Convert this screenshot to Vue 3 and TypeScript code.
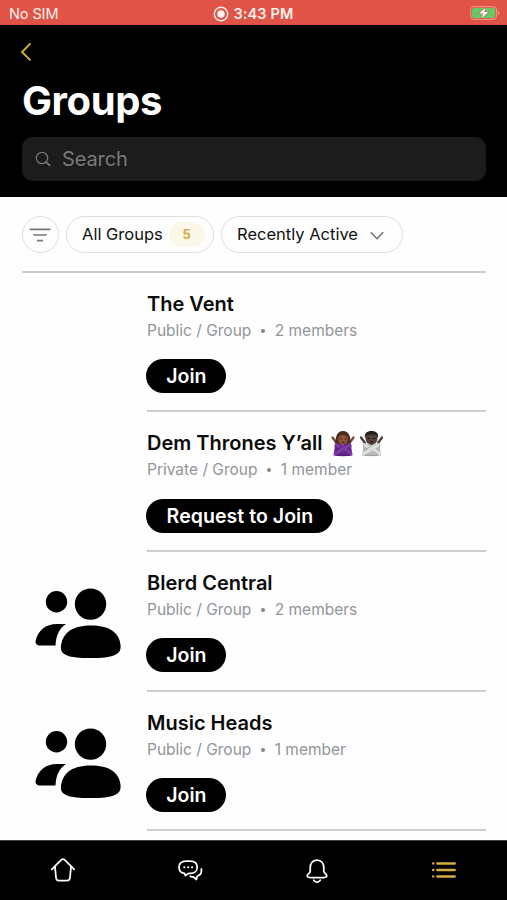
<script setup lang="ts">
interface Group {
  name: string
  privacy: string
  members: string
  action: string
  avatar: boolean
  emoji: boolean
}

const groups: Group[] = [
  { name: 'The Vent', privacy: 'Public', members: '2 members', action: 'Join', avatar: false, emoji: false },
  { name: 'Dem Thrones Y’all', privacy: 'Private', members: '1 member', action: 'Request to Join', avatar: false, emoji: true },
  { name: 'Blerd Central', privacy: 'Public', members: '2 members', action: 'Join', avatar: true, emoji: false },
  { name: 'Music Heads', privacy: 'Public', members: '1 member', action: 'Join', avatar: true, emoji: false },
]
</script>

<template>
  <div class="screen">
    <div class="status">
      <span class="carrier">No SIM</span>
      <span class="clock">
        <svg class="record" viewBox="0 0 16 16"><circle cx="8" cy="8" r="6.7" fill="none" stroke="currentColor" stroke-width="1.4" /><circle cx="8" cy="8" r="3.7" fill="currentColor" /></svg>
        <span class="time">3:43 PM</span>
      </span>
      <svg class="battery" viewBox="0 0 30 14">
        <rect x=".6" y=".6" width="26" height="12.8" rx="3.8" fill="none" stroke="#f09184" stroke-width="1.1" />
        <rect x="2" y="2" width="23.2" height="10" rx="2.5" fill="#62cb68" />
        <path d="M28 4.8c1.8.8 1.8 3.6 0 4.4z" fill="#f09184" />
        <path d="M15.500 1.800 9 7.600h4L11.800 12.200l6.400-6.100h-4z" fill="#fff" stroke="#df5446" stroke-width="1.200" paint-order="stroke" />
      </svg>
    </div>

    <header class="header">
      <svg class="back" viewBox="0 0 12 20"><path d="M10.5 1.4 2 10l8.5 8.4" fill="none" stroke="#d3ad43" stroke-width="1.9" /></svg>
      <h1>Groups</h1>
      <div class="search">
        <svg viewBox="0 0 16 16"><circle cx="7" cy="7" r="5.7" fill="none" stroke="currentColor" stroke-width="1.2" /><path d="m11.2 11.2 3.5 3.2" stroke="currentColor" stroke-width="1.7" stroke-linecap="round" /></svg>
        <span>Search</span>
      </div>
    </header>

    <main class="content">
      <div class="filters">
        <button class="pill round">
          <svg viewBox="0 0 22 14"><path d="M1.2 1.3h19.6M4.8 7h12.4M8.700 12.600h4.600" stroke="#777" stroke-width="1.700" stroke-linecap="round" /></svg>
        </button>
        <button class="pill all"><span class="label">All Groups</span><span class="count">5</span></button>
        <button class="pill recent">
          <span class="label">Recently Active</span>
          <svg viewBox="0 0 14 9"><path d="m1.2 1.700 5.8 6 5.8-6" fill="none" stroke="#777" stroke-width="1.6" stroke-linecap="round" stroke-linejoin="round" /></svg>
        </button>
      </div>

      <section v-for="group in groups" :key="group.name" class="group">
        <div class="avatar">
          <svg v-if="group.avatar" viewBox="0 0 86 71">
            <circle cx="21.5" cy="13.8" r="10.7" />
            <circle cx="55.5" cy="16.1" r="15.7" />
            <path d="M31 36C25.500 39.500 21 46 20.500 57.500H5C1.500 57.500 0 55 .7 52.500 3 42.500 10.500 36 22 36Z" />
            <path d="M56 37.500C39 37.500 28 43.500 26 57.500 24.800 66 31 70 55.500 70S86.500 66 85.500 57C84 43.500 73 37.500 56 37.500Z" />
          </svg>
        </div>
        <div class="details">
          <h2>
            <span>{{ group.name }}</span>
            <svg v-if="group.emoji" class="emoji" viewBox="0 0 53 27">
              <path d="M1.500 7.500 5.500 13 4.500 16M22.500 7.500 18.500 13 19.500 16" fill="none" stroke="#79452f" stroke-width="2.200" stroke-linecap="round" />
              <path d="M4.500 15C4 8 5.500 1 12 1S20 8 19.500 15Z" fill="#4c2a1f" />
              <ellipse cx="12" cy="9" rx="5" ry="6" fill="#8d543b" />
              <path d="M6.500 8C7.500 4 10 2.500 12.500 2.500S17 5 17.500 8c-2-3-7-5-11 0Z" fill="#4c2a1f" />
              <path d="M8.800 9h1.700M13.700 9h1.700M10.800 12.300h2.600" stroke="#351b16" stroke-width="1.100" />
              <path d="M4 15.500 9 13.500l3 2 3-2 5 2 1.500 10q-9.500 1.500-19 0Z" fill="#65258f" />
              <path d="m5.500 15 14 8.500M18.500 15 4.500 23.500" stroke="#7b3aa5" stroke-width="3.600" stroke-linecap="round" />
              <path d="m4.500 20.500 6.500-4.200M12.800 20.800l5.500 3.500M5 25.300h14" stroke="#481469" stroke-width=".7" />
              <path d="M30 7.500l4 5.500-1 3M51 7.500l-4 5.500 1 3" fill="none" stroke="#423532" stroke-width="2.200" stroke-linecap="round" />
              <ellipse cx="40.500" cy="8.500" rx="6" ry="6.500" fill="#554039" />
              <path d="M34 8.500C33 3 36 1 40.500 1s7.500 2 6.500 7.500l-1.500-3q-5-2-10 0Z" fill="#242323" />
              <path d="M36.500 8.500h2.300M42.200 8.500h2.300M39 12h3" stroke="#171515" stroke-width="1.200" />
              <path d="m32.500 15.500 5-2 3 2 3-2 5 2 1.500 10q-9.500 1.500-19 0Z" fill="#b6b8ba" />
              <path d="m34 15 14 8.500M47 15 33 23.500" stroke="#dcddde" stroke-width="3.600" stroke-linecap="round" />
              <path d="m33 20.500 6.500-4.200M41.300 20.800l5.500 3.500M33.500 25.300h14" stroke="#8e9193" stroke-width=".7" />
            </svg>
          </h2>
          <p class="meta"><span>{{ group.privacy }} / Group</span><i></i><span>{{ group.members }}</span></p>
          <button class="join" :class="{ request: group.emoji }"><span>{{ group.action }}</span></button>
        </div>
      </section>
    </main>

    <nav class="tabs">
      <a><svg viewBox="0 0 26 26"><path d="M1.800 12.300 10.500 3.600Q13 .8 15.500 3.600L24.200 12.300M5 9.800 6 20.500Q6.200 23.700 9 23.700H17Q19.800 23.700 20 20.500L21 9.800" /></svg></a>
      <a><svg viewBox="0 0 26 26"><path d="M9.500 4H13C17.700 4 20.200 6.500 20.200 10.200S17.600 16.400 13.500 16.400H11.500L8.300 18.500 7.500 16.400C3.700 15.800 2 13.500 2 10.200 2 6.500 4.600 4 9.500 4Z" /><path d="M24.300 12C24.900 15.500 23.300 18.200 20.200 19.300L19.400 22.500 16.500 19.900Q14.500 20 13.200 19.200" /><path d="M7.200 10.200h.2M11.100 10.200h.2M15 10.200h.2" stroke-width="2" /></svg></a>
      <a><svg viewBox="0 0 26 26"><path d="M6.200 11C6.200 6.200 8.700 3 13 3S19.800 6.200 19.800 11V14.500C19.800 16 23.200 17.600 22.800 19 22.600 20.500 21 20.500 19.700 20.500H6.300C5 20.500 3.400 20.500 3.200 19 2.800 17.600 6.200 16 6.200 14.500ZM9.800 23.200Q13 27 16.200 23.200" /></svg></a>
      <a class="active"><svg viewBox="0 0 26 26"><path d="M2.100 6.500h.3M6.300 6.500H23.800M2.100 13h.3M6.300 13H23.800M2.100 19.500h.3M6.300 19.500H23.800" /></svg></a>
    </nav>
  </div>
</template>

<style>
body { margin: 0; background: #fff; }
</style>

<style scoped>
* { box-sizing: border-box; }
svg { display: block; flex: none; }
button { font: inherit; color: inherit; margin: 0; padding: 0; background: none; border: 0; }
.screen { width: 507px; height: 900px; overflow: hidden; display: flex; flex-direction: column; background: #fefefe; color: #111; font-family: Inter, "Liberation Sans", sans-serif; }
.status { height: 25px; flex: none; display: grid; grid-template-columns: 1fr auto 1fr; align-items: center; padding: 2px 7px 0 7px; background: #df5446; color: #fff0ed; }
.carrier { font-size: 14.5px; letter-spacing: -.1px; padding-left: 2px; }
.clock { display: flex; align-items: center; gap: 4px; font-size: 14.5px; font-weight: 600; letter-spacing: .15px; }
.record { width: 16px; height: 16px; }
.battery { width: 30px; height: 14px; justify-self: end; margin-top: -1px; }
.header { height: 172px; flex: none; padding: 17px 21px 0 22px; background: #000; }
.back { width: 12px; height: 20px; margin-left: -2px; }
h1 { margin: 14px 0 0; height: 50px; line-height: 49px; font-size: 40px; font-weight: 700; letter-spacing: -.4px; color: #fff; }
.search { margin-top: 11px; height: 44px; border-radius: 11px; background: #1c1c1c; display: flex; align-items: center; padding-left: 13px; gap: 11px; color: #797979; font-size: 20px; letter-spacing: -.1px; }
.search svg { width: 16px; height: 16px; }
.content { flex: 1; min-height: 0; overflow: hidden; padding: 0 21px 0 22px; }
.filters { height: 75.500px; padding-top: 19px; border-bottom: 2px solid #cbcccb; display: flex; align-items: flex-start; gap: 7px; }
.pill { height: 37px; flex: none; border: 1.500px solid #dedede; border-radius: 19px; display: flex; align-items: center; font-size: 16.500px; white-space: nowrap; }
.label { margin-top: -1px; }
.round { width: 37px; justify-content: center; }
.round svg { width: 22px; height: 14px; margin-left: -2px; }
.all { width: 148px; padding-left: 15px; gap: 6px; }
.count { width: 36px; height: 25px; line-height: 25px; text-align: center; border-radius: 13px; background: #fbf8e9; color: #d3ad43; font-size: 13px; font-weight: 700; }
.recent { width: 182px; padding-left: 15px; gap: 12px; }
.recent svg { width: 14px; height: 9px; margin-top: 1px; }
.group { height: 139.700px; display: grid; grid-template-columns: 125px 1fr; }
.avatar { padding: 36px 0 0 13px; }
.avatar svg { width: 86px; height: 71px; fill: #000; }
.details { border-bottom: 2px solid #cdcdcd; padding-top: 18px; display: flex; flex-direction: column; align-items: flex-start; }
h2 { margin: 0; height: 26px; display: flex; align-items: center; gap: 8px; font-size: 20px; line-height: 26px; font-weight: 600; white-space: nowrap; color: #0b0b0b; }
.emoji { width: 53px; height: 27px; }
.meta { margin: 4px 0 0; height: 20px; display: flex; align-items: center; font-size: 15.500px; line-height: 20px; color: #929599; white-space: nowrap; }
.meta i { width: 4px; height: 4px; margin: 0 9.700px; border-radius: 50%; background: #858585; }
.join { width: 80px; height: 34px; margin: 18.500px 0 0 -.6px; border-radius: 17px; background: #000; color: #fff; font-size: 19.500px; font-weight: 600; letter-spacing: .05px; line-height: 35px; white-space: nowrap; }
.request { width: 187px; }
.tabs { height: 60px; flex: none; background: #000; border-top: 1px solid #444; padding-top: 16px; display: grid; grid-template-columns: repeat(4, 1fr); justify-items: center; }
.tabs a { color: #fff; }
.tabs svg { width: 26px; height: 26px; fill: none; stroke: currentColor; stroke-width: 1.750; stroke-linecap: round; stroke-linejoin: round; }
.tabs .active { color: #d3ad43; }
.tabs .active svg { stroke-width: 2.300; }
</style>
